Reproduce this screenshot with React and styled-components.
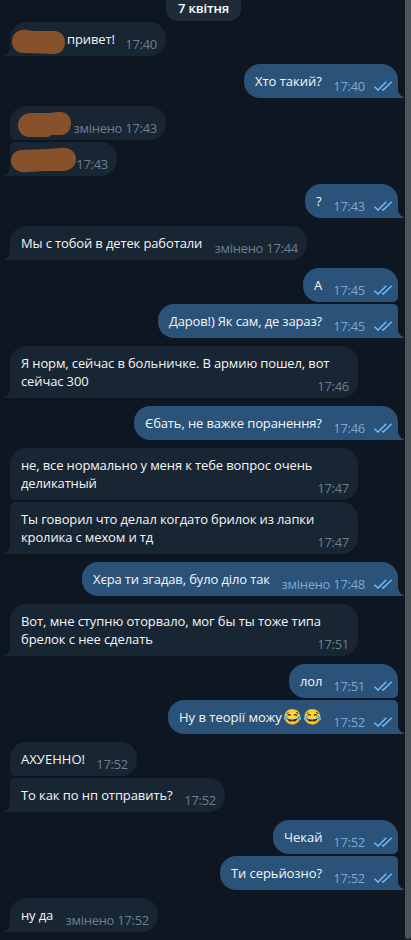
import styled, { createGlobalStyle } from 'styled-components';

const messages = [
  {
    width: 156,
    lines: ['привет!'],
    indent: 46,
    time: '17:40',
    last: true,
    mark: { x: 1, y: 7, w: 55, h: 26, d: 'M11 1 C16 0 19 2 24 2 L43 2 C50 2 54 7 54 13 C54 20 50 25 43 25 L15 24 C6 25 1 19 1 13 C1 6 5 2 11 1Z' },
  },
  { out: true, width: 154, lines: ['Хто такий?'], spacing: -0.03, time: '17:40', last: true },
  {
    width: 156,
    lines: [],
    time: 'змінено 17:43',
    mark: { x: 7, y: 5, w: 55, h: 27, d: 'M13 2 L33 2 C37 1 40 1 43 1 C50 1 54 6 54 12 C54 19 50 24 44 24 L35 24 L31 26 L12 26 C6 26 1 21 1 14 C1 7 6 3 13 2Z' },
  },
  {
    width: 107,
    lines: [],
    time: '17:43',
    last: true,
    joined: true,
    mark: { x: 0, y: 5, w: 67, h: 27, d: 'M12 3 L37 2 C43 2 49 0 55 1 C61 1 66 6 66 12 C66 19 61 23 54 24 L34 24 L18 25 C8 27 1 20 1 14 C1 8 5 3 12 3Z' },
  },
  { out: true, width: 93, lines: ['?'], time: '17:43', last: true },
  { width: 297, lines: ['Мы с тобой в детек работали'], time: 'змінено 17:44', last: true },
  { out: true, width: 95, lines: ['А'], time: '17:45' },
  { out: true, width: 240, lines: ['Даров!) Як сам, де зараз?'], spacing: -0.15, time: '17:45', last: true, joined: true },
  { width: 348, lines: ['Я норм, сейчас в больничке. В армию пошел, вот', 'сейчас 300'], time: '17:46', last: true },
  { out: true, width: 264, lines: ['Єбать, не важке поранення?'], time: '17:46', last: true },
  { width: 348, lines: ['не, все нормально у меня к тебе вопрос очень', 'деликатный'], time: '17:47' },
  { width: 348, lines: ['Ты говорил что делал когдато брилок из лапки', 'кролика с мехом и тд'], time: '17:47', last: true, joined: true },
  { out: true, width: 316, lines: ['Хєра ти згадав, було діло так'], time: 'змінено 17:48', last: true },
  { width: 348, lines: ['Вот, мне ступню оторвало, мог бы ты тоже типа', 'брелок с нее сделать'], spacing: -0.09, time: '17:51', last: true },
  { out: true, width: 109, lines: ['лол'], time: '17:51' },
  { out: true, width: 230, lines: ['Ну в теорії можу'], spacing: 0, emoji: '😂😂', time: '17:52', last: true, joined: true },
  { width: 127, lines: ['АХУЕННО!'], spacing: 0.05, time: '17:52' },
  { width: 215, lines: ['То как по нп отправить?'], spacing: -0.09, time: '17:52', last: true, joined: true },
  { out: true, width: 125, lines: ['Чекай'], spacing: 0, time: '17:52' },
  { out: true, width: 178, lines: ['Ти серьйозно?'], spacing: -0.08, time: '17:52', last: true, joined: true },
  { width: 148, lines: ['ну да'], time: 'змінено 17:52', last: true },
];

const Checks = () => (
  <CheckIcon width='19' height='10' viewBox='0 0 19 10' fill='none'>
    <path d='M0.5 5.8 L4 9 L12.3 0.8' />
    <path d='M8 8 L9.2 9 L17.7 0.8' />
  </CheckIcon>
);

const App = () => {
  return (
    <Page>
      <GlobalStyle />
      <Chat>
        <DateBadge>7 квітня</DateBadge>
        {messages.map((m, i) => (
          <Row key={i} $out={m.out} $last={m.last}>
            <Bubble $out={m.out} $last={m.last} $joined={m.joined} $width={m.width}>
              <Text $indent={m.indent} $spacing={m.spacing}>
                {m.lines.map((line) => (
                  <Line key={line}>
                    {line}
                    {m.emoji && <Emoji>{m.emoji}</Emoji>}
                  </Line>
                ))}
              </Text>
              <Meta $out={m.out}>
                {m.time}
                {m.out && <Checks />}
              </Meta>
              {m.mark && (
                <Mark
                  $x={m.mark.x}
                  $y={m.mark.y}
                  width={m.mark.w}
                  height={m.mark.h}
                  viewBox={`0 0 ${m.mark.w} ${m.mark.h}`}
                >
                  <path d={m.mark.d} />
                </Mark>
              )}
              {m.last && (
                <Tail $out={m.out} width='7' height='10' viewBox='0 0 7 10'>
                  <path d='M7 0 H6 C6 5 4 7.5 0.6 9 C0 9.4 0.2 10 1 10 H7Z' />
                </Tail>
              )}
            </Bubble>
          </Row>
        ))}
      </Chat>
      <Track>
        <Thumb />
      </Track>
    </Page>
  );
};

const GlobalStyle = createGlobalStyle`
  * {
    box-sizing: border-box;
  }
  body {
    margin: 0;
    background: #0e1621;
    font-family: 'Open Sans', 'Noto Sans', sans-serif;
  }
`;

const Page = styled.div`
  display: flex;
  width: 411px;
  height: 940px;
  overflow: hidden;
  background: #0e1621;
`;

const Chat = styled.main`
  display: flex;
  flex-direction: column;
  flex: 1;
  padding: 0 7px 0 10px;
`;

const DateBadge = styled.div`
  flex: none;
  width: 75px;
  height: 21px;
  margin: 0 0 1px 156px;
  border-radius: 0 0 12px 12px;
  background: #1e2c3a;
  color: #fff;
  font-size: 13px;
  font-weight: 600;
  line-height: 17px;
  letter-spacing: -0.12px;
  text-align: center;
`;

const Row = styled.div`
  display: flex;
  flex: none;
  justify-content: ${(p) => (p.$out ? 'flex-end' : 'flex-start')};
  margin-bottom: ${(p) => (p.$last ? 8 : 2)}px;
`;

const corners = (p) => {
  const top = p.$joined ? 5 : 16;
  const bottom = p.$last ? 0 : 5;
  return p.$out ? `16px ${top}px ${bottom}px 16px` : `${top}px 16px 16px ${bottom}px`;
};

const Bubble = styled.div`
  position: relative;
  display: flex;
  justify-content: space-between;
  width: ${(p) => p.$width}px;
  min-height: 34px;
  padding: 8px ${(p) => (p.$out ? 5 : 9)}px 8px 11px;
  border-radius: ${corners};
  background: ${(p) => (p.$out ? '#2b5278' : '#182533')};
`;

const Text = styled.div`
  width: 0;
  padding-left: ${(p) => p.$indent || 0}px;
  color: #f5f5f5;
  font-size: 13px;
  line-height: 18px;
  letter-spacing: ${(p) => p.$spacing ?? -0.13}px;
  white-space: pre;
`;

const Line = styled.div`
  width: max-content;
  height: 18px;
`;

const Emoji = styled.span`
  margin-left: 1px;
  font-family: 'Noto Color Emoji', sans-serif;
  font-size: 15px;
  line-height: 1;
  letter-spacing: 1.5px;
`;

const Meta = styled.div`
  display: flex;
  align-items: center;
  align-self: flex-end;
  height: 18px;
  margin-bottom: -5px;
  color: ${(p) => (p.$out ? '#7da8d3' : '#6d7f8f')};
  font-size: 13px;
  line-height: 18px;
  letter-spacing: -0.28px;
  white-space: nowrap;
`;

const CheckIcon = styled.svg`
  margin-left: 9px;

  path {
    stroke: #72bcfd;
    stroke-width: 1.5;
  }
`;

const Mark = styled.svg`
  position: absolute;
  left: ${(p) => p.$x}px;
  top: ${(p) => p.$y}px;
  fill: #87522b;
`;

const Tail = styled.svg`
  position: absolute;
  bottom: 0;
  ${(p) => (p.$out ? 'right: -6px; transform: scaleX(-1);' : 'left: -6px;')}
  fill: ${(p) => (p.$out ? '#2b5278' : '#182533')};
`;

const Track = styled.div`
  width: 6px;
  height: 940px;
  background: #0e1621;
`;

const Thumb = styled.div`
  height: 939px;
  border-radius: 0 0 3px 3px;
  background: #4c535b;
`;

export default App;
